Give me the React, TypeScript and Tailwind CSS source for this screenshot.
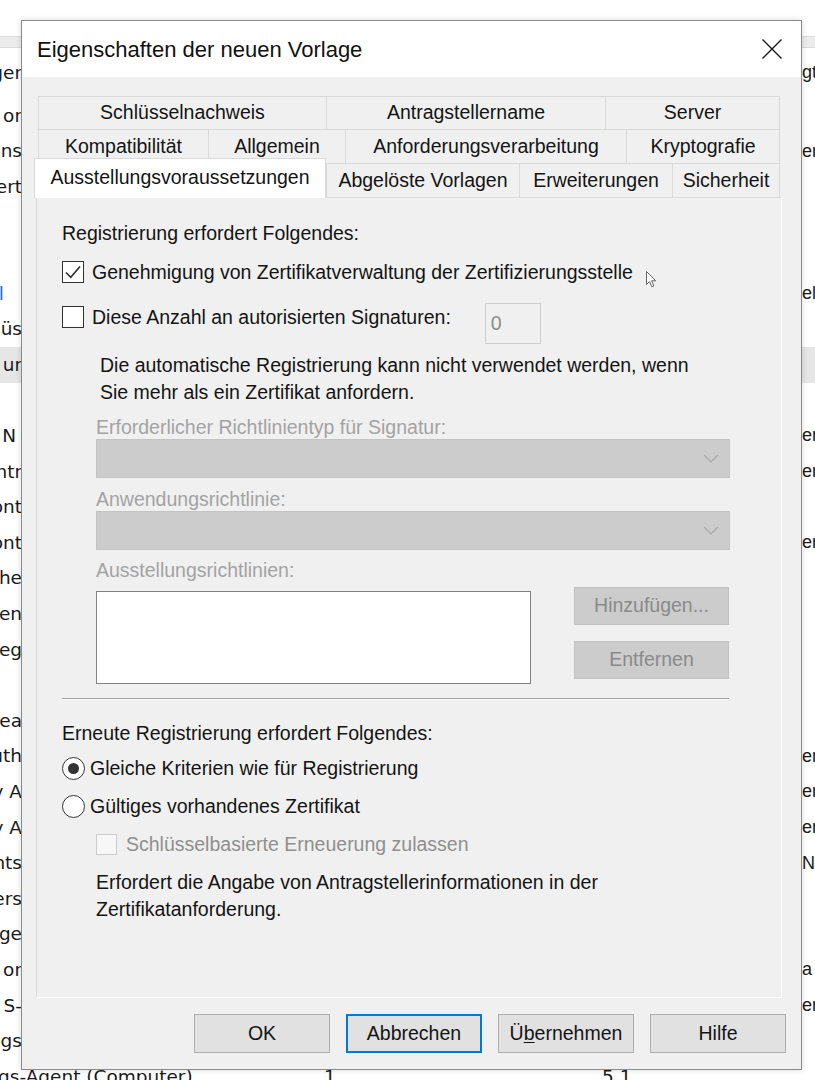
import React from "react";

type BgRow = { l?: string; r?: string; band?: boolean; blue?: boolean };

const bgRows: BgRow[] = [
  { l: "or" },
  { l: "ons", r: "er" },
  { l: "ert" },
  {},
  {},
  { l: "l", blue: true, r: "el" },
  { l: "üs" },
  { l: "ur", band: true },
  {},
  { l: "N", r: "er" },
  { l: "ntr", r: "er" },
  { l: "ont" },
  { l: "ont", r: "er" },
  { l: "he" },
  { l: "en" },
  { l: "eg" },
  {},
  { l: "hea" },
  { l: "uth", r: "er" },
  { l: "y A", r: "er" },
  { l: "y A", r: "er" },
  { l: "nts", r: "Ne" },
  { l: "ers" },
  { l: "ge" },
  { l: "or", r: "a" },
  { l: "S-", r: "er" },
  { l: "gs" },
];

function BgLine({ row }: { row: BgRow }) {
  return (
    <div
      className={`flex h-[35.6px] shrink-0 items-center justify-between text-[18.5px] ${
        row.band ? "bg-[#e6e6e6]" : ""
      }`}
    >
      <div className={`flex w-[22px] justify-end overflow-hidden whitespace-nowrap ${row.blue ? "pr-[18px]" : ""} ${row.l === "N" ? "pr-[6px]" : ""}`}>
        <span className={`shrink-0 ${row.blue ? "text-[#1a6fd1]" : "text-[#1a1a1a]"}`}>{row.l ?? ""}</span>
      </div>
      <div className="w-[13px] overflow-hidden whitespace-nowrap font-['Liberation_Sans',Arial,sans-serif] text-[18px]">
        <span className="text-[#1a1a1a]">{row.r ?? ""}</span>
      </div>
    </div>
  );
}

function Background() {
  return (
    <div className="flex h-full w-full flex-col font-['DejaVu_Sans',sans-serif]">
      <div className="h-[36px] shrink-0" />
      <div className="h-[12px] shrink-0 border-y border-[#dcdcdc] bg-[#ececec]" />
      <div className="flex h-[49.8px] shrink-0 items-center justify-between text-[18.5px] text-[#1a1a1a]">
        <div className="flex w-[22px] justify-end overflow-hidden whitespace-nowrap">
          <span className="shrink-0">ger</span>
        </div>
        <div className="w-[13px] overflow-hidden whitespace-nowrap font-['Liberation_Sans',Arial,sans-serif] text-[18px]">
          <span>gt</span>
        </div>
      </div>
      {bgRows.map((r, i) => (
        <BgLine key={i} row={r} />
      ))}
      <div className="flex h-[35.6px] shrink-0 items-center text-[18.5px] text-[#1a1a1a] whitespace-nowrap">
        <span className="-ml-[2px] w-[326px] shrink-0">gs-Agent (Computer)</span>
        <span className="w-[278px] shrink-0">1</span>
        <span>5.1</span>
      </div>
    </div>
  );
}

function Tab({ className, children }: { className: string; children: React.ReactNode }) {
  return (
    <div
      className={`flex h-full shrink-0 items-center justify-center border-l border-t border-[#d9d9d9] bg-[#f0f0f0] whitespace-nowrap ${className}`}
    >
      {children}
    </div>
  );
}

function Check({ checked }: { checked?: boolean }) {
  return (
    <div className="flex h-[22px] w-[22px] shrink-0 items-center justify-center border-[1.5px] border-[#333333] bg-white">
      {checked && (
        <svg width="18" height="18" viewBox="0 0 18 18" fill="none">
          <path d="M2 9.5 L6.8 14.3 L16 3.5" stroke="#333333" strokeWidth="1.7" />
        </svg>
      )}
    </div>
  );
}

function Radio({ checked }: { checked?: boolean }) {
  return (
    <div className="flex h-[23px] w-[23px] shrink-0 items-center justify-center rounded-full border-[1.5px] border-[#333333] bg-white">
      {checked && <div className="h-[11px] w-[11px] rounded-full bg-[#333333]" />}
    </div>
  );
}

function Chevron() {
  return (
    <svg width="16" height="9" viewBox="0 0 16 9" fill="none">
      <path d="M1 1 L8 8 L15 1" stroke="#a8a8a8" strokeWidth="1.2" />
    </svg>
  );
}

function Combo() {
  return (
    <div className="ml-[34px] flex h-[39px] w-[634px] items-center justify-end border border-[#c4c4c4] bg-[#cccccc] pr-[10px]">
      <Chevron />
    </div>
  );
}

function Panel() {
  return (
    <div className="-ml-[2px] flex h-[801px] w-[746px] flex-col border border-[#d9d9d9] border-b-white border-r-white bg-[#f0f0f0] pl-[25px] pt-[24px] text-[19.5px] text-[#141414]">
      <div className="h-[22px] leading-[22px]">Registrierung erfordert Folgendes:</div>

      <div className="mt-[17px] flex h-[22px] items-center">
        <Check checked />
        <span className="ml-[8px] leading-[22px]">Genehmigung von Zertifikatverwaltung der Zertifizierungsstelle</span>
      </div>

      <div className="mt-[20px] flex items-start">
        <div className="mt-[3px] flex h-[22px] items-center">
          <Check />
          <span className="ml-[8px] leading-[22px]">Diese Anzahl an autorisierten Signaturen:</span>
        </div>
        <div className="ml-[34px] h-[41px] w-[56px] border border-[#cfcfcf] bg-[#f0f0f0] pl-[5px] pt-[7px] leading-[24px] text-[#8c8c8c]">
          0
        </div>
      </div>

      <div className="ml-[38px] mt-[8px] leading-[27px]">
        Die automatische Registrierung kann nicht verwendet werden, wenn
        <br />
        Sie mehr als ein Zertifikat anfordern.
      </div>

      <div className="ml-[34px] mt-[10px] h-[22px] leading-[22px] text-[#a3a3a3]">
        Erforderlicher Richtlinientyp für Signatur:
      </div>
      <div className="mt-[1px]">
        <Combo />
      </div>

      <div className="ml-[34px] mt-[10px] h-[22px] leading-[22px] text-[#a3a3a3]">Anwendungsrichtlinie:</div>
      <div className="mt-[1px]">
        <Combo />
      </div>

      <div className="ml-[34px] mt-[9px] h-[22px] leading-[22px] text-[#a3a3a3]">Ausstellungsrichtlinien:</div>

      <div className="ml-[34px] mt-[6px] flex items-start">
        <div className="mt-[4px] h-[93px] w-[435px] border border-[#828282] bg-white" />
        <div className="ml-[43px] flex flex-col">
          <div className="flex h-[38px] w-[155px] items-center justify-center border border-[#c2c2c2] bg-[#cccccc] text-[#8a8a8a]">
            Hinzufügen...
          </div>
          <div className="mt-[16px] flex h-[38px] w-[155px] items-center justify-center border border-[#c2c2c2] bg-[#cccccc] text-[#8a8a8a]">
            Entfernen
          </div>
        </div>
      </div>

      <div className="mt-[14px] h-[2px] w-[667px] border-t border-b border-t-[#a0a0a0] border-b-white" />

      <div className="mt-[22px] h-[22px] leading-[22px]">Erneute Registrierung erfordert Folgendes:</div>

      <div className="mt-[13px] flex h-[22px] items-center">
        <Radio checked />
        <span className="ml-[5px] leading-[22px]">Gleiche Kriterien wie für Registrierung</span>
      </div>

      <div className="mt-[16px] flex h-[22px] items-center">
        <Radio />
        <span className="ml-[5px] leading-[22px]">Gültiges vorhandenes Zertifikat</span>
      </div>

      <div className="ml-[34px] mt-[16px] flex h-[22px] items-center">
        <div className="h-[21px] w-[21px] shrink-0 border border-[#cccccc] bg-[#f7f7f7]" />
        <span className="ml-[9px] leading-[22px] text-[#8f8f8f]">Schlüsselbasierte Erneuerung zulassen</span>
      </div>

      <div className="ml-[34px] mt-[14px] leading-[27px]">
        Erfordert die Angabe von Antragstellerinformationen in der
        <br />
        Zertifikatanforderung.
      </div>
    </div>
  );
}

function DlgButton({ children, focused }: { children: React.ReactNode; focused?: boolean }) {
  return (
    <div
      className={`flex h-[39px] w-[136px] items-center justify-center bg-[#e1e1e1] text-[19.5px] text-[#141414] ${
        focused ? "border-2 border-[#0078d7]" : "border border-[#adadad]"
      }`}
    >
      {children}
    </div>
  );
}

function Cursor() {
  return (
    <svg className="absolute left-[646px] top-[271px]" width="11" height="17" viewBox="0 0 11 17">
      <path
        d="M0.5 0.5 L0.5 13.5 L3.5 10.5 L5.8 15.8 L7.8 15 L5.6 9.8 L9.8 9.8 Z"
        fill="white"
        stroke="#555555"
        strokeWidth="0.9"
        strokeLinejoin="round"
      />
    </svg>
  );
}

export default function App() {
  return (
    <div className="relative h-[1080px] w-[815px] overflow-hidden bg-white font-['Liberation_Sans',Arial,sans-serif] text-black">
      <Background />

      <div className="absolute left-[21px] top-[20px] flex h-[1050px] w-[781px] flex-col border border-[#8a8a8a] bg-[#f0f0f0] shadow-[0_0_6px_rgba(0,0,0,0.15)]">
        <div className="flex h-[56px] shrink-0 items-center justify-between bg-white pl-[15px] pr-[18px]">
          <span className="text-[22px] text-[#111111]">Eigenschaften der neuen Vorlage</span>
          <svg width="22" height="22" viewBox="0 0 22 22" fill="none">
            <path d="M1.5 1.5 L20.5 20.5 M20.5 1.5 L1.5 20.5" stroke="#1a1a1a" strokeWidth="1.4" />
          </svg>
        </div>

        <div className="flex flex-1 flex-col pl-[16px] pt-[19px]">
          <div className="flex w-[742px] flex-col text-[19.5px] text-[#141414]">
            <div className="flex h-[33px]">
              <Tab className="w-[288px]">Schlüsselnachweis</Tab>
              <Tab className="w-[279px]">Antragstellername</Tab>
              <Tab className="w-[175px] border-r">Server</Tab>
            </div>
            <div className="flex h-[34px]">
              <Tab className="w-[170px]">Kompatibilität</Tab>
              <Tab className="w-[137px]">Allgemein</Tab>
              <Tab className="w-[281px]">Anforderungsverarbeitung</Tab>
              <Tab className="w-[154px] border-r">Kryptografie</Tab>
            </div>
            <div className="flex h-[34px]">
              <div className="relative z-10 -ml-[4px] -mt-[5px] flex h-[40px] w-[292px] shrink-0 items-center justify-center border border-b-0 border-[#d9d9d9] bg-white pb-[2px] whitespace-nowrap">
                Ausstellungsvoraussetzungen
              </div>
              <Tab className="w-[193px]">Abgelöste Vorlagen</Tab>
              <Tab className="w-[153px]">Erweiterungen</Tab>
              <Tab className="w-[108px] border-r">Sicherheit</Tab>
            </div>
          </div>

          <Panel />

          <div className="mt-[16px] flex justify-end gap-[16px] pr-[15px]">
            <DlgButton>OK</DlgButton>
            <DlgButton focused>Abbrechen</DlgButton>
            <DlgButton>
              <span>
                Ü<span className="underline underline-offset-2">b</span>ernehmen
              </span>
            </DlgButton>
            <DlgButton>Hilfe</DlgButton>
          </div>
        </div>
      </div>

      <Cursor />
    </div>
  );
}
